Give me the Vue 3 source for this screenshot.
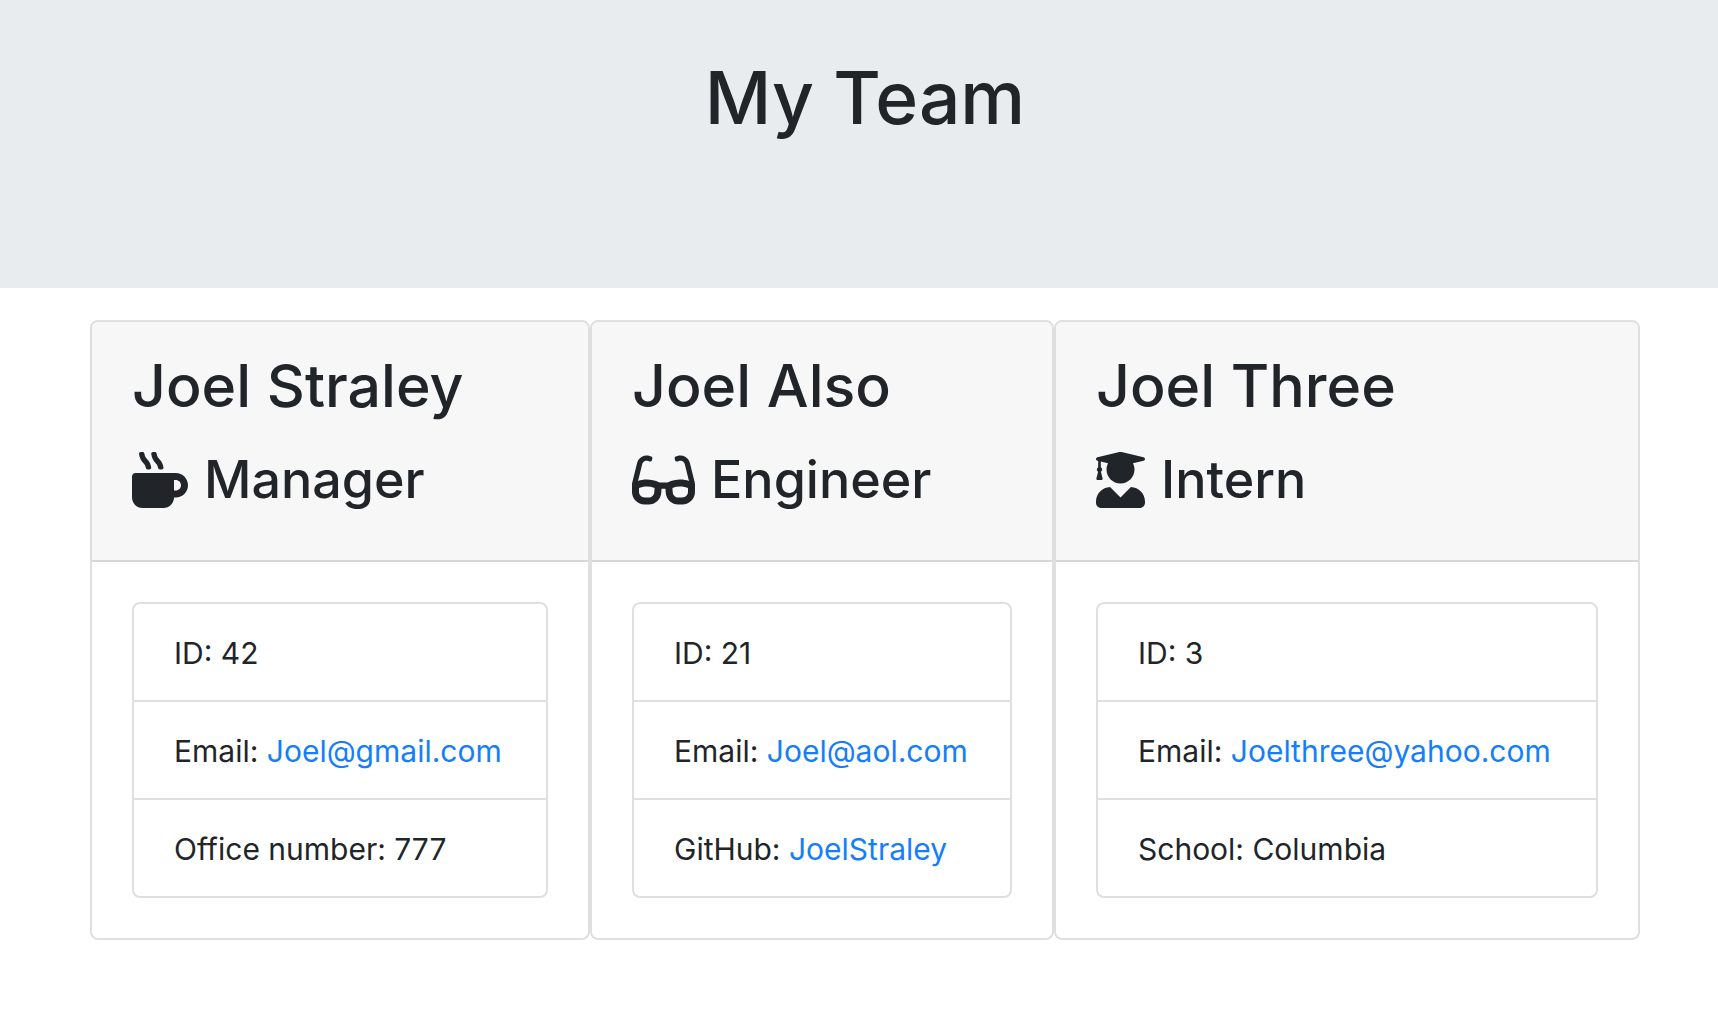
<script setup>
const icons = {
  mug: {
    width: 512,
    path: 'M127.1 146.5c1.3 7.7 8 13.5 16 13.5h16.5c9.8 0 17.6-8.5 16.3-18-3.8-28.2-16.4-54.2-36.6-74.7-14.4-14.7-23.6-33.3-26.4-53.5C111.8 5.9 105 0 96.8 0H80.4C70.6 0 63 8.5 64.1 18c3.9 31.9 18 61.3 40.6 84.4 12 12.2 19.7 27.5 22.4 44.1zm112 0c1.3 7.7 8 13.5 16 13.5h16.5c9.8 0 17.6-8.5 16.3-18-3.8-28.2-16.4-54.2-36.6-74.7-14.4-14.7-23.6-33.3-26.4-53.5C223.8 5.9 217 0 208.8 0h-16.4c-9.8 0-17.5 8.5-16.3 18 3.9 31.9 18 61.3 40.6 84.4 12 12.2 19.7 27.5 22.4 44.1zM400 192H32c-17.7 0-32 14.3-32 32v192c0 53 43 96 96 96h192c53 0 96-43 96-96h16c61.8 0 112-50.2 112-112s-50.2-112-112-112zm0 160h-16v-96h16c26.5 0 48 21.5 48 48s-21.5 48-48 48z',
  },
  glasses: {
    width: 576,
    path: 'M574.1 280.37L528.75 98.66c-5.91-23.7-21.59-44.05-43-55.81-21.44-11.73-46.97-14.11-70.19-6.33l-15.25 5.08c-8.39 2.79-12.92 11.86-10.12 20.24l5.06 15.18c2.79 8.38 11.85 12.91 20.23 10.12l13.18-4.39c10.87-3.62 23-3.57 33.16 1.73 10.29 5.37 17.57 14.56 20.37 25.82l38.46 153.82c-22.19-6.81-49.79-12.46-81.2-12.46-34.77 0-73.98 7.02-114.85 26.74h-73.18c-40.87-19.74-80.08-26.75-114.86-26.75-31.42 0-59.02 5.65-81.21 12.46l38.46-153.83c2.79-11.25 10.09-20.45 20.38-25.81 10.16-5.3 22.28-5.35 33.15-1.73l13.17 4.39c8.38 2.79 17.44-1.74 20.23-10.12l5.06-15.18c2.8-8.38-1.73-17.45-10.12-20.24l-15.25-5.08c-23.22-7.78-48.75-5.41-70.19 6.33-21.41 11.77-37.09 32.11-43 55.8L1.9 280.37A64.218 64.218 0 0 0 0 295.86v70.25C0 429.01 51.58 480 115.2 480h37.12c60.28 0 110.37-45.94 114.88-105.37l2.93-38.63h35.75l2.93 38.63C313.31 434.06 363.4 480 423.68 480h37.12c63.62 0 115.2-50.99 115.2-113.88v-70.25c0-5.23-.64-10.43-1.9-15.5zm-370.72 89.42c-1.97 25.91-24.4 46.21-51.06 46.21H115.2C86.97 416 64 393.62 64 366.11v-37.54c18.12-6.49 43.42-12.92 72.58-12.92 23.86 0 47.26 4.33 69.93 12.92l-3.13 41.22zM512 366.12c0 27.51-22.97 49.88-51.2 49.88h-37.12c-26.67 0-49.1-20.3-51.06-46.21l-3.13-41.22c22.67-8.59 46.08-12.92 69.95-12.92 29.12 0 54.43 6.44 72.55 12.93v37.54z',
  },
  graduate: {
    width: 448,
    path: 'M319.4 320.6L224 416l-95.4-95.4C57.1 323.7 0 382.2 0 454.4v9.6c0 26.5 21.5 48 48 48h352c26.5 0 48-21.5 48-48v-9.6c0-72.2-57.1-130.7-128.6-133.8zM13.6 79.8l6.4 1.5v58.4c-7 4.2-12 11.5-12 20.3 0 8.4 4.6 15.4 11.1 19.7L3.5 242c-1.7 6.9 2.1 14 7.6 14h41.8c5.5 0 9.3-7.1 7.6-14l-15.6-62.3C51.4 175.4 56 168.4 56 160c0-8.8-5-16.1-12-20.3V87.1l66 15.9c-8.6 17.2-14 36.4-14 57 0 70.7 57.3 128 128 128s128-57.3 128-128c0-20.6-5.3-39.8-14-57l96.3-23.2c18.2-4.4 18.2-27.1 0-31.5l-190.4-46c-13-3.1-26.7-3.1-39.7 0L13.6 48.2c-18.1 4.3-18.1 27.2 0 31.6z',
  },
}

const team = [
  {
    name: 'Joel Straley',
    role: 'Manager',
    icon: icons.mug,
    facts: [
      { label: 'ID', value: '42' },
      { label: 'Email', value: 'Joel@gmail.com', href: 'mailto:Joel@gmail.com' },
      { label: 'Office number', value: '777' },
    ],
  },
  {
    name: 'Joel Also',
    role: 'Engineer',
    icon: icons.glasses,
    facts: [
      { label: 'ID', value: '21' },
      { label: 'Email', value: 'Joel@aol.com', href: 'mailto:Joel@aol.com' },
      { label: 'GitHub', value: 'JoelStraley', href: 'https://github.com/JoelStraley' },
    ],
  },
  {
    name: 'Joel Three',
    role: 'Intern',
    icon: icons.graduate,
    facts: [
      { label: 'ID', value: '3' },
      { label: 'Email', value: 'Joelthree@yahoo.com', href: 'mailto:Joelthree@yahoo.com' },
      { label: 'School', value: 'Columbia' },
    ],
  },
]
</script>

<template>
  <div class="page">
    <header class="banner">
      <h1>My Team</h1>
    </header>
    <main class="team">
      <article v-for="member in team" :key="member.name" class="card">
        <header class="card-header">
          <h2>{{ member.name }}</h2>
          <h3>
            <svg class="icon" :viewBox="`0 0 ${member.icon.width} 512`" aria-hidden="true">
              <path :d="member.icon.path" fill="currentColor" />
            </svg>
            <span>{{ member.role }}</span>
          </h3>
        </header>
        <div class="card-body">
          <ul class="facts">
            <li v-for="fact in member.facts" :key="fact.label">
              {{ fact.label }}: <a v-if="fact.href" :href="fact.href">{{ fact.value }}</a><template v-else>{{ fact.value }}</template>
            </li>
          </ul>
        </div>
      </article>
    </main>
  </div>
</template>

<style>
body {
  margin: 0;
  background: #fff;
}
</style>

<style scoped>
.page {
  color: #212529;
  font-family: Inter, "Liberation Sans", sans-serif;
  font-size: 30px;
  line-height: 48px;
}

h1,
h2,
h3 {
  margin: 0;
  font-weight: 500;
}

.banner {
  padding: 50px 0 142px 12px;
  background: #e9ecef;
  text-align: center;
}

h1 {
  font-size: 73px;
  line-height: 96px;
}

.team {
  display: grid;
  grid-template-columns: 500fr 464fr 586fr;
  margin: 32px 78px 32px 90px;
}

.card {
  border: 2px solid #dfdfdf;
  border-radius: 8px;
  overflow: hidden;
}

.card-header {
  padding: 24px 40px;
  border-bottom: 2px solid #d8d8d8;
  background: #f7f7f7;
}

h2 {
  margin-bottom: 14px;
  font-size: 59px;
  line-height: 80px;
}

h3 {
  display: flex;
  align-items: center;
  gap: 16px;
  margin-bottom: 16px;
  font-size: 52px;
  line-height: 80px;
}

.icon {
  flex: none;
  height: 56px;
}

.card-body {
  padding: 40px;
}

.facts {
  margin: 0;
  padding: 0;
  border: 2px solid #dfdfdf;
  border-radius: 8px;
  list-style: none;
}

.facts li {
  padding: 25px 40px 23px;
  white-space: nowrap;
}

.facts li + li {
  border-top: 2px solid #dfdfdf;
}

a {
  color: #147efb;
  text-decoration: none;
}
</style>
